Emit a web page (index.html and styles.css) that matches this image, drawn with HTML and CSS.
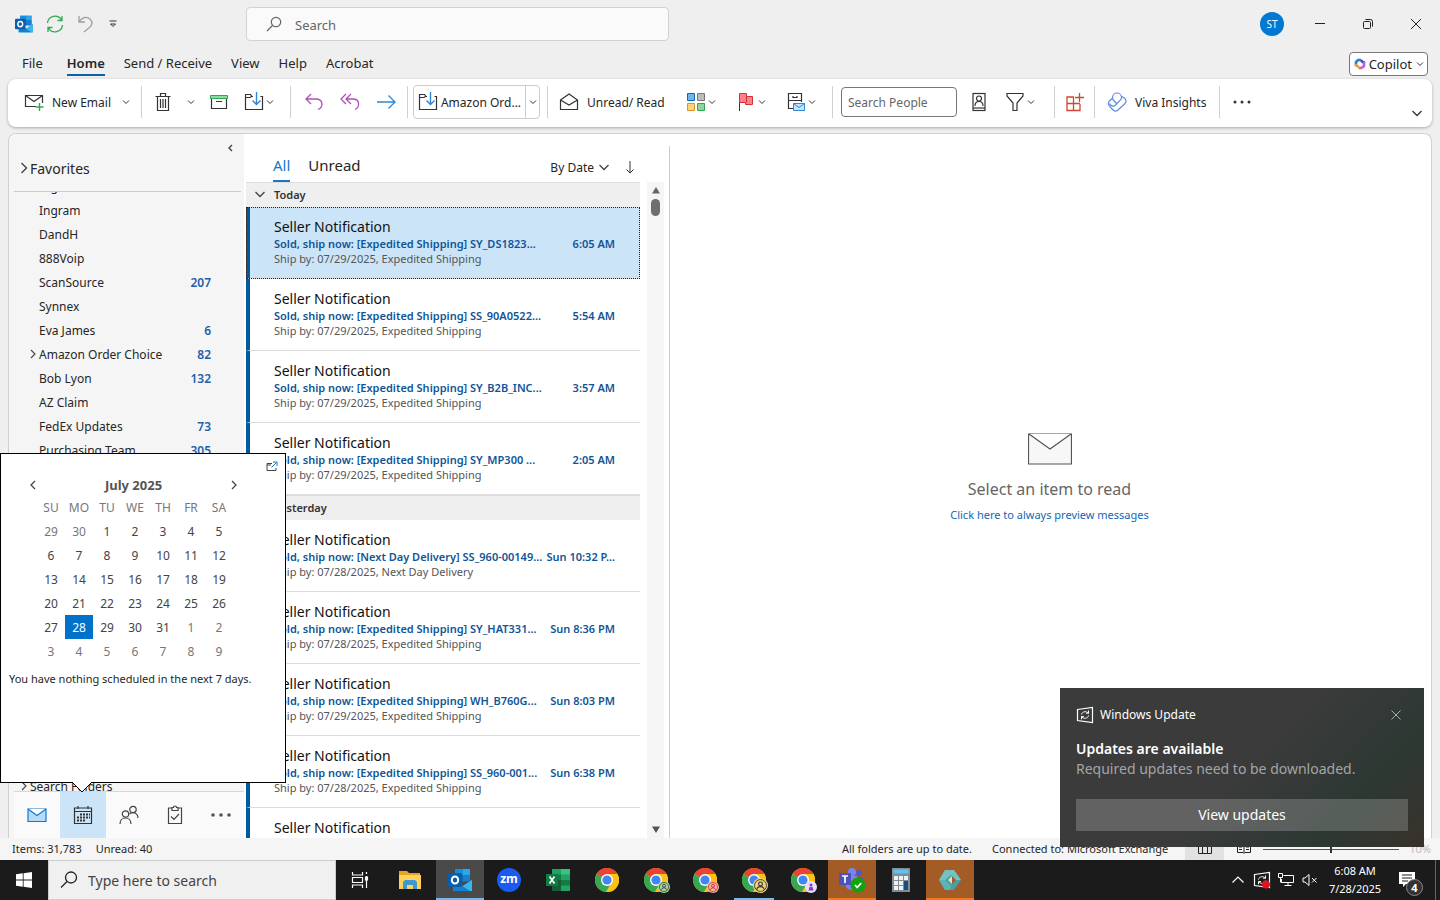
FILE: index.html
```
<!DOCTYPE html>
<html lang="en">

<head>
    <meta charset="utf-8">
    <meta name="viewport" content="width=device-width, initial-scale=1.0">
    <title>Outlook</title>
    <link rel="stylesheet" href="styles.css">
</head>

<body>
    <svg class="sprite" aria-hidden="true">
        <symbol id="down" viewBox="0 0 10 10"><path d="M2 3.500l3 3 3-3" fill="none" stroke="#333"/></symbol>
        <symbol id="right" viewBox="0 0 10 12"><path d="M2.500 1l5 5-5 5" fill="none" stroke="#444" stroke-width="1.400"/></symbol>
        <symbol id="move" viewBox="0 0 20 20"><path d="M9 4.500H8L6.500 2.500h-5v15h17v-13h-2M1.500 5.500H6l1.500-1" fill="none" stroke="#333" stroke-width="1.200"/><path d="M12.500 0v12.500M8.500 8.500l4 4 4-4" fill="none" stroke="#2b88d8" stroke-width="1.400"/></symbol>
        <symbol id="outlook" viewBox="0 0 24 24"><path d="M7 1h15v13H7z" fill="#0f6cbd"/><path d="M7 1h8v6H7z" fill="#1490df"/><path d="M15 1h7v6h-7z" fill="#28a8ea"/><path d="M15 7h7v6h-7z" fill="#1b7fd0"/><path d="M5 12l10 6 9-6v11H5z" fill="#1490df"/><path d="M24 12v11H7z" fill="#35b8f1"/><path d="M5 12l17 11H5z" fill="#1a7fcb"/><rect x="0" y="5" width="14" height="14" rx="1" fill="#0a5cad"/><ellipse cx="7" cy="12" rx="3.200" ry="3.500" fill="none" stroke="#fff" stroke-width="2"/></symbol>
        <symbol id="chrome" viewBox="0 0 24 24"><circle cx="12" cy="12" r="12" fill="#fbc116"/><path d="M12 12L1.600 6A12 12 0 0 1 22.400 6z" fill="#ea4335"/><path d="M12 12L1.600 6A12 12 0 0 0 11 24l5-9z" fill="#34a853"/><path d="M12 6h10.400a12 12 0 0 1-11.400 18l6.200-9z" fill="#fbc116"/><circle cx="12" cy="12" r="6" fill="#fff"/><circle cx="12" cy="12" r="4.600" fill="#4285f4"/></symbol>
        <symbol id="person" viewBox="0 0 12 12"><circle cx="6" cy="6" r="5.500" fill="none" stroke="currentColor" stroke-width=".8"/><circle cx="6" cy="4.500" r="1.800" fill="none" stroke="currentColor"/><path d="M2.500 10c.4-4 6.600-4 7 0" fill="none" stroke="currentColor"/></symbol>
        <symbol id="update" viewBox="0 0 18 18"><path d="M1.500 3.500l15-2v15l-15-2z" fill="none" stroke="#fff" stroke-width="1.200"/><path d="M5.500 8.500c.5-3 5-4 7-1M12.500 4.500v2.700H10M12.500 9.500c-.5 3-5 4-7 1M5.500 13.300v-2.700H8" fill="none" stroke="#fff"/></symbol>
    </svg>

    <header class="titlebar">
        <div class="quick">
            <svg width="18" height="18"><use href="#outlook"/></svg>
            <button aria-label="Send and receive all"><svg width="18" height="18" viewBox="0 0 18 18" fill="none" stroke="#33a652" stroke-width="1.300"><path d="M1.500 8A7.500 7.500 0 0 1 15.500 5M16 1v4.500h-4.500M16.500 10a7.500 7.500 0 0 1-14 3M2 17v-4.500h4.500"/></svg></button>
            <button aria-label="Undo"><svg width="18" height="18" viewBox="0 0 18 18" fill="none" stroke="#a0a0a0" stroke-width="1.300"><path d="M2 1v6h6M2 7c3-5 8-6 11-3s2 6 0 8l-6 5"/></svg></button>
            <button aria-label="Customize"><svg width="10" height="10" viewBox="0 0 10 10" fill="none" stroke="#333"><path d="M1.500 2h7M2.500 5l2.500 2.500L7.500 5z"/></svg></button>
        </div>
        <label class="search">
            <svg width="16" height="16" viewBox="0 0 16 16" fill="none" stroke="#666" stroke-width="1.200"><circle cx="10" cy="6" r="4.700"/><path d="M6.500 9.500L1 15"/></svg>
            <input type="text" placeholder="Search" aria-label="Search">
        </label>
        <div class="window-controls">
            <span class="avatar">ST</span>
            <button aria-label="Minimize"><svg width="12" height="12" viewBox="0 0 12 12"><path d="M1 5.500h10" stroke="#222"/></svg></button>
            <button aria-label="Restore"><svg width="12" height="12" viewBox="0 0 12 12" fill="none" stroke="#222"><rect x="1.500" y="3.500" width="7" height="7" rx="1"/><path d="M3.500 1.500h5a2 2 0 0 1 2 2v5"/></svg></button>
            <button aria-label="Close"><svg width="12" height="12" viewBox="0 0 12 12"><path d="M1 1l10 10M11 1L1 11" stroke="#222"/></svg></button>
        </div>
    </header>

    <nav class="tabs">
        <a href="#">File</a>
        <a href="#" class="active">Home</a>
        <a href="#">Send / Receive</a>
        <a href="#">View</a>
        <a href="#">Help</a>
        <a href="#">Acrobat</a>
        <button class="copilot"><svg width="12" height="12" viewBox="0 0 12 12" fill="none" stroke-width="2.600"><path d="M2 8V4l2-2h3" stroke="#2383dc"/><path d="M7 2l1.500 2L11 5" stroke="#2b57c9"/><path d="M10 4v4L8 10" stroke="#c45be0"/><path d="M8 10H5" stroke="#f05a78"/><path d="M5 10L3.500 8 1 7" stroke="#f5a13a"/></svg>Copilot<svg width="10" height="10"><use href="#down"/></svg></button>
    </nav>

    <div class="ribbon">
        <div class="group new">
            <button><svg width="20" height="20" viewBox="0 0 20 20" fill="none" stroke="#333" stroke-width="1.200"><path d="M12 14.500H1.500v-11h17V11M1.500 3.500l8.500 6 8.500-6"/><path d="M15.500 11v8M11.500 15h8" stroke="#33a652" stroke-width="1.400"/></svg><span>New Email</span></button>
            <button class="drop" aria-label="New items"><svg width="10" height="10"><use href="#down"/></svg></button>
        </div>
        <div class="group">
            <button class="icon wide" aria-label="Delete"><svg width="20" height="20" viewBox="0 0 20 20" fill="none" stroke="#333" stroke-width="1.200"><path d="M2.500 4.500h15M7.500 4V1.500h5V4M4.500 4.500v14h11v-14M7.500 7v9M10 7v9M12.500 7v9"/></svg></button>
            <button class="drop" aria-label="Delete options"><svg width="10" height="10"><use href="#down"/></svg></button>
            <button class="icon wide" aria-label="Archive"><svg width="20" height="20" viewBox="0 0 20 20" fill="none"><path d="M2.500 6v10.500h15V6M7 9.500h6" stroke="#333" stroke-width="1.200"/><path d="M1.500 3.500h17v3h-17z" fill="#8bdba3" stroke="#33a652"/></svg></button>
            <button class="menu" aria-label="Move"><svg width="20" height="20"><use href="#move"/></svg><svg width="10" height="10"><use href="#down"/></svg></button>
        </div>
        <div class="group replies">
            <button class="icon" aria-label="Reply"><svg width="20" height="20" viewBox="0 0 20 20" fill="none" stroke="#ae50b8" stroke-width="1.300"><path d="M7 2L2 7l5 5M2 7h10c7 0 8 8 2 10.500"/></svg></button>
            <button class="icon" aria-label="Reply all"><svg width="20" height="20" viewBox="0 0 20 20" fill="none" stroke="#ae50b8" stroke-width="1.300"><path d="M6 2L1 7l5 5M11 2L6 7l5 5M6 7h7c7 0 7 8 2 10.500"/></svg></button>
            <button class="icon" aria-label="Forward"><svg width="20" height="20" viewBox="0 0 20 20" fill="none" stroke="#2b88d8" stroke-width="1.300"><path d="M1 10h18M12.500 3.500L19 10l-6.500 6.500"/></svg></button>
        </div>
        <div class="group">
            <div class="quickstep">
                <button><svg width="20" height="20"><use href="#move"/></svg><span>Amazon Ord...</span></button>
                <button class="drop" aria-label="Quick steps"><svg width="10" height="10"><use href="#down"/></svg></button>
            </div>
        </div>
        <div class="group tags">
            <button class="text"><svg width="20" height="20" viewBox="0 0 20 20" fill="none" stroke="#333" stroke-width="1.200"><path d="M1.500 8L10 2l8.500 6v9.500h-17zM1.500 8l8.500 5 8.500-5"/></svg><span>Unread/ Read</span></button>
            <button class="menu" aria-label="Categorize"><svg width="20" height="20" viewBox="0 0 20 20"><path d="M1.500 1.500h7v7h-7z" fill="#6fb5e8" stroke="#1068b0"/><path d="M11.500 1.500h7v7h-7z" fill="#bbb" stroke="#777"/><path d="M1.500 11.500h7v7h-7z" fill="#ffd680" stroke="#dd9326"/><path d="M11.500 11.500h7v7h-7z" fill="#8ed69d" stroke="#33a652"/></svg><svg width="10" height="10"><use href="#down"/></svg></button>
            <button class="menu" aria-label="Follow up"><svg width="20" height="20" viewBox="0 0 20 20"><path d="M3.500 2v17" stroke="#333"/><path d="M3.500 1.500h7v3h6v8h-7v-2h-6z" fill="#ff808a" stroke="#d13438"/><path d="M10.500 4v6.500" stroke="#d13438"/></svg><svg width="10" height="10"><use href="#down"/></svg></button>
            <button class="menu" aria-label="Archive mail"><svg width="20" height="20" viewBox="0 0 20 20" fill="none"><path d="M7 16.500H2.500v-15h13V10M2.500 8.500h13M7 4v1.500h4V4" stroke="#333" stroke-width="1.200"/><path d="M7.500 11.500h11v7h-11z" fill="#c9e5fb" stroke="#2b88d8"/><path d="M7.500 11.500l5.500 4 5.500-4" stroke="#2b88d8"/></svg><svg width="10" height="10"><use href="#down"/></svg></button>
        </div>
        <div class="group find">
            <input type="text" placeholder="Search People" aria-label="Search People">
            <button class="icon" aria-label="Address book"><svg width="20" height="20" viewBox="0 0 20 20" fill="none" stroke="#333" stroke-width="1.200"><rect x="4" y="1.500" width="12" height="17"/><path d="M4 16h12"/><circle cx="10" cy="6.500" r="2.500"/><path d="M6 14c0-6 8-6 8 0"/></svg></button>
            <button class="menu filter" aria-label="Filter email"><svg width="20" height="20" viewBox="0 0 20 20" fill="none" stroke="#333" stroke-width="1.200"><path d="M2 1.500h16V4l-6 7v7.500H8V11L2 4z"/></svg><svg width="10" height="10"><use href="#down"/></svg></button>
        </div>
        <div class="group">
            <button class="icon addins" aria-label="All apps"><svg width="20" height="20" viewBox="0 0 20 20" fill="none" stroke="#d0472b" stroke-width="1.300"><path d="M9 5H2v13.500h13V12M2 11.500h13M8.500 5v13.500M14.500 1v9M10 5.500h9"/></svg></button>
        </div>
        <div class="group">
            <button class="text viva"><svg width="20" height="20" viewBox="0 0 20 20" fill="none" stroke="#5b8ce0" stroke-width="1.200"><path d="M5.500 7V5.500a4.500 4.500 0 0 1 9 0c0 1-.5 2-1.200 2.700L8.500 13M5.500 6L2 9.500a3.500 3.500 0 0 0 0 4l3.500 4a4 4 0 0 0 5.500.5l6.500-6a4 4 0 0 0 .5-5.500l-3-2M5.500 7l4 4.500M8.500 13c-2 2-5 1-6-1.500"/></svg><span>Viva Insights</span></button>
        </div>
        <button class="icon more" aria-label="More commands"><svg width="20" height="20" viewBox="0 0 20 20" fill="#333"><circle cx="3" cy="10" r="1.500"/><circle cx="10" cy="10" r="1.500"/><circle cx="17" cy="10" r="1.500"/></svg></button>
        <button class="ribbon-toggle" aria-label="Ribbon options"><svg width="12" height="12" viewBox="0 0 12 12"><path d="M1.500 4L6 8.500 10.500 4" fill="none" stroke="#333" stroke-width="1.300"/></svg></button>
    </div>

    <main class="panes">
        <aside class="folders">
            <div class="fold-head">
                <button class="collapse" aria-label="Minimize folder pane"><svg width="8" height="10" viewBox="0 0 8 10"><path d="M6 2L3 5l3 3" fill="none" stroke="#444" stroke-width="1.400"/></svg></button>
                <a href="#" class="favorites"><svg width="10" height="12"><use href="#right"/></svg>Favorites</a>
            </div>
            <ul class="tree">
                <li><a href="#">Ing</a></li>
                <li><a href="#">Ingram</a></li>
                <li><a href="#">DandH</a></li>
                <li><a href="#">888Voip</a></li>
                <li><a href="#">ScanSource</a><b>207</b></li>
                <li><a href="#">Synnex</a></li>
                <li><a href="#">Eva James</a><b>6</b></li>
                <li class="parent"><svg width="8" height="10"><use href="#right"/></svg><a href="#">Amazon Order Choice</a><b>82</b></li>
                <li><a href="#">Bob Lyon</a><b>132</b></li>
                <li><a href="#">AZ Claim</a></li>
                <li><a href="#">FedEx Updates</a><b>73</b></li>
                <li><a href="#">Purchasing Team</a><b>305</b></li>
                <li class="parent root"><svg width="8" height="10"><use href="#right"/></svg><a href="#">Search Folders</a></li>
            </ul>
            <nav class="modules">
                <button aria-label="Mail"><svg width="20" height="20" viewBox="0 0 20 20"><path d="M1 4h18v12.500H1z" fill="#b4dcfa" stroke="#1878c8" stroke-width="1.200"/><path d="M1 4l9 6.500L19 4" fill="#fff" stroke="#1878c8" stroke-width="1.200"/></svg></button>
                <button class="on" aria-label="Calendar"><svg width="20" height="20" viewBox="0 0 20 20" fill="none" stroke="#333" stroke-width="1.200"><path d="M1.500 3h17v15.500h-17zM1.500 6.500h17M5 1v3M15 1v3"/><path d="M7 9.500h10M4 12.500h13M4 15.500h9" stroke-width="2" stroke-dasharray="2 1"/></svg></button>
                <button aria-label="People"><svg width="20" height="20" viewBox="0 0 20 20" fill="none" stroke="#444" stroke-width="1.200"><circle cx="6.500" cy="9" r="3.200"/><path d="M1 19c0-8 11-8 11 0"/><circle cx="14" cy="4.500" r="3.200"/><path d="M10.500 9c3-3 8.500-1 8.500 4"/></svg></button>
                <button aria-label="Tasks"><svg width="20" height="20" viewBox="0 0 20 20" fill="none" stroke="#444" stroke-width="1.200"><path d="M7 3H3.500v15.500h13V3H13M7 5.500v-3h1.500a1.500 1.500 0 0 1 3 0H13v3zM6 11.500l3 3 5-5.500"/></svg></button>
                <button aria-label="More"><svg width="22" height="20" viewBox="0 0 22 20" fill="#555"><circle cx="3" cy="10" r="1.800"/><circle cx="11" cy="10" r="1.800"/><circle cx="19" cy="10" r="1.800"/></svg></button>
            </nav>

            <!-- calendar peek, opens above the module buttons -->
            <section class="peek">
                <button class="dock" aria-label="Dock the peek"><svg width="12" height="12" viewBox="0 0 12 12" fill="none"><path d="M6 2.500H1v7h9V7M1 4h4" stroke="#444"/><path d="M5.500 6.500l5-5M7 1h4v4" stroke="#1878c8"/></svg></button>
                <div class="month">
                    <button aria-label="Previous month"><svg width="10" height="12" viewBox="0 0 10 12"><path d="M7 2L3 6l4 4" fill="none" stroke="#444" stroke-width="1.300"/></svg></button>
                    <strong>July 2025</strong>
                    <button aria-label="Next month"><svg width="10" height="12" viewBox="0 0 10 12"><path d="M3 2l4 4-4 4" fill="none" stroke="#444" stroke-width="1.300"/></svg></button>
                </div>
                <table>
                    <tr><th>SU</th><th>MO</th><th>TU</th><th>WE</th><th>TH</th><th>FR</th><th>SA</th></tr>
                    <tr><td class="out">29</td><td class="out">30</td><td>1</td><td>2</td><td>3</td><td>4</td><td>5</td></tr>
                    <tr><td>6</td><td>7</td><td>8</td><td>9</td><td>10</td><td>11</td><td>12</td></tr>
                    <tr><td>13</td><td>14</td><td>15</td><td>16</td><td>17</td><td>18</td><td>19</td></tr>
                    <tr><td>20</td><td>21</td><td>22</td><td>23</td><td>24</td><td>25</td><td>26</td></tr>
                    <tr><td>27</td><td class="today">28</td><td>29</td><td>30</td><td>31</td><td class="out">1</td><td class="out">2</td></tr>
                    <tr><td class="out">3</td><td class="out">4</td><td class="out">5</td><td class="out">6</td><td class="out">7</td><td class="out">8</td><td class="out">9</td></tr>
                </table>
                <p>You have nothing scheduled in the next 7 days.</p>
                <svg class="tip" width="20" height="11" viewBox="0 0 20 11"><path d="M0 0l10 10L20 0" fill="#fff" stroke="#000"/></svg>
            </section>
        </aside>

        <section class="list">
            <div class="list-head">
                <a href="#" class="active">All</a>
                <a href="#">Unread</a>
                <button class="sort">By Date<svg width="12" height="12" viewBox="0 0 12 12"><path d="M1.500 4L6 8.500 10.500 4" fill="none" stroke="#444" stroke-width="1.300"/></svg></button>
                <button aria-label="Sort order"><svg width="10" height="14" viewBox="0 0 10 14"><path d="M5 1v12M1.500 9.500L5 13l3.500-3.500" fill="none" stroke="#333"/></svg></button>
            </div>
            <div class="scroll">
                <div class="messages">
                    <h3><svg width="12" height="12" viewBox="0 0 12 12"><path d="M1.500 4L6 8.500 10.500 4" fill="none" stroke="#444" stroke-width="1.300"/></svg>Today</h3>
                    <article class="selected"><h4>Seller Notification</h4><div class="subject"><span>Sold, ship now: [Expedited Shipping] SY_DS1823...</span><time>6:05 AM</time></div><p>Ship by: 07/29/2025, Expedited Shipping</p></article>
                    <article><h4>Seller Notification</h4><div class="subject"><span>Sold, ship now: [Expedited Shipping] SS_90A0522...</span><time>5:54 AM</time></div><p>Ship by: 07/29/2025, Expedited Shipping</p></article>
                    <article><h4>Seller Notification</h4><div class="subject"><span>Sold, ship now: [Expedited Shipping] SY_B2B_INC...</span><time>3:57 AM</time></div><p>Ship by: 07/29/2025, Expedited Shipping</p></article>
                    <article><h4>Seller Notification</h4><div class="subject"><span>Sold, ship now: [Expedited Shipping] SY_MP300 ...</span><time>2:05 AM</time></div><p>Ship by: 07/29/2025, Expedited Shipping</p></article>
                    <h3><svg width="12" height="12" viewBox="0 0 12 12"><path d="M1.500 4L6 8.500 10.500 4" fill="none" stroke="#444" stroke-width="1.300"/></svg>Yesterday</h3>
                    <article><h4>Seller Notification</h4><div class="subject"><span>Sold, ship now: [Next Day Delivery] SS_960-00149...</span><time>Sun 10:32 P...</time></div><p>Ship by: 07/28/2025, Next Day Delivery</p></article>
                    <article><h4>Seller Notification</h4><div class="subject"><span>Sold, ship now: [Expedited Shipping] SY_HAT331...</span><time>Sun 8:36 PM</time></div><p>Ship by: 07/28/2025, Expedited Shipping</p></article>
                    <article><h4>Seller Notification</h4><div class="subject"><span>Sold, ship now: [Expedited Shipping] WH_B760G...</span><time>Sun 8:03 PM</time></div><p>Ship by: 07/29/2025, Expedited Shipping</p></article>
                    <article><h4>Seller Notification</h4><div class="subject"><span>Sold, ship now: [Expedited Shipping] SS_960-001...</span><time>Sun 6:38 PM</time></div><p>Ship by: 07/28/2025, Expedited Shipping</p></article>
                    <article><h4>Seller Notification</h4></article>
                </div>
                <div class="scrollbar">
                    <svg width="10" height="8" viewBox="0 0 10 8"><path d="M5 1l4 6.500H1z" fill="#666"/></svg>
                    <span class="thumb"></span>
                    <svg class="end" width="10" height="8" viewBox="0 0 10 8"><path d="M5 7L1 .5h8z" fill="#555"/></svg>
                </div>
            </div>
        </section>

        <section class="reading">
            <svg width="44" height="32" viewBox="0 0 44 32"><path d="M.5 1h43v30H.5z" fill="#f7f7f7" stroke="#555" stroke-width="1.200"/><path d="M1 1l21 15L43 1" fill="#fff" stroke="#555" stroke-width="1.200"/></svg>
            <h2>Select an item to read</h2>
            <a href="#">Click here to always preview messages</a>
        </section>
    </main>

    <footer class="status">
        <span>Items: 31,783</span>
        <span>Unread: 40</span>
        <span class="sync">All folders are up to date.</span>
        <span class="conn">Connected to: Microsoft Exchange</span>
        <button class="on" aria-label="Normal view"><svg width="14" height="12" viewBox="0 0 14 12" fill="none" stroke="#222"><path d="M.5.500h13v10H.5zM4.500.500v10M9.500.500v10"/></svg></button>
        <button aria-label="Reading view"><svg width="14" height="12" viewBox="0 0 14 12" fill="none" stroke="#222"><path d="M.5 1.500H6l1 1 1-1h5.500v8H8l-1 1-1-1H.5zM7 2v8M2 4h3M2 6.500h3M9 4h3M9 6.500h3"/></svg></button>
        <input type="range" aria-label="Zoom" min="0" max="100" value="50">
        <span class="zoom">10%</span>
    </footer>

    <div class="taskbar">
        <button class="start" aria-label="Start"><svg width="16" height="16" viewBox="0 0 16 16" fill="#fff"><path d="M0 2.300L6.800 1.300V7.600H0zM7.600 1.200L16 0v7.600H7.600zM0 8.400h6.800v6.300L0 13.700zM7.600 8.400H16V16l-8.400-1.200z"/></svg></button>
        <label class="tasksearch">
            <svg width="18" height="18" viewBox="0 0 18 18" fill="none" stroke="#222" stroke-width="1.300"><circle cx="11" cy="6.500" r="5.500"/><path d="M7 10.500L1 16.500"/></svg>
            <input type="text" placeholder="Type here to search" aria-label="Type here to search">
        </label>
        <div class="apps">
            <button aria-label="Task view"><svg width="18" height="18" viewBox="0 0 18 18" fill="none" stroke="#fff" stroke-width="1.200"><path d="M1.500 1v3h10V1M1.500 6.500h10v5h-10zM1.500 17v-3h10v3M15.500 5v12M15.500 1v2"/><path d="M14.500 6h2v3h-2z" fill="#fff"/></svg></button>
            <button class="explorer" aria-label="File Explorer"><svg width="24" height="24" viewBox="0 0 24 24"><path d="M1 3h8l2 2h11v16H1z" fill="#e5a428"/><path d="M1 7h22v14H1z" fill="#ffd15a"/><path d="M5 21v-7l2-2h10l2 2v7h-4v-4H9v4z" fill="#3e97d1"/></svg></button>
            <button class="current" aria-label="Outlook"><svg width="24" height="24"><use href="#outlook"/></svg></button>
            <button aria-label="Zoom"><span class="zm">zm</span></button>
            <button aria-label="Excel"><svg width="24" height="24" viewBox="0 0 24 24"><path d="M6 1h18v22H6z" fill="#21a366"/><path d="M6 6.500h9V12H6zM15 12h9v5.500h-9z" fill="#107c41"/><path d="M15 1h9v5.500h-9z" fill="#33c481"/><path d="M6 12h9v11H6z" fill="#185c37"/><path d="M0 6h12v12H0z" fill="#107c41"/><path d="M3.500 8.500l5 7M8.500 8.500l-5 7" stroke="#fff" stroke-width="1.700"/></svg></button>
            <button aria-label="Chrome"><svg width="24" height="24"><use href="#chrome"/></svg></button>
            <button aria-label="Chrome, profile 2"><svg width="24" height="24"><use href="#chrome"/></svg><span class="profile green"><svg width="10" height="10"><use href="#person"/></svg></span></button>
            <button aria-label="Chrome, profile 3"><svg width="24" height="24"><use href="#chrome"/></svg><span class="profile red"><svg width="10" height="10"><use href="#person"/></svg></span></button>
            <button class="open" aria-label="Chrome, profile 4"><svg width="24" height="24"><use href="#chrome"/></svg><span class="profile gold"><svg width="13" height="13"><use href="#person"/></svg></span></button>
            <button aria-label="Chrome, profile 5"><svg width="24" height="24"><use href="#chrome"/></svg><span class="profile violet"><svg width="8" height="8" viewBox="0 0 8 8" fill="#7c3fc0"><circle cx="4" cy="2" r="1.500"/><path d="M1.500 7.500l1-3.500h3l1 3.500z"/></svg></span></button>
            <button class="alert" aria-label="Teams"><svg width="28" height="26" viewBox="0 0 28 26"><circle cx="14" cy="5" r="4" fill="#7b83eb"/><circle cx="21" cy="6" r="3" fill="#5059c9"/><path d="M8 9h11v9a6 6 0 0 1-11 2z" fill="#7b83eb"/><path d="M19 10h6v7h-6z" fill="#5059c9"/><path d="M1 6h12v12H1z" fill="#4b53bc"/><path d="M4 9h6M7 9v7" stroke="#fff" stroke-width="1.700"/><circle cx="20" cy="18" r="7.500" fill="#13a10e"/><path d="M17 18l2.200 2.500 4-4.500" fill="none" stroke="#fff" stroke-width="1.700"/></svg></button>
            <button aria-label="Calculator"><svg width="18" height="24" viewBox="0 0 18 24"><path d="M0 0h18v24H0z" fill="#848b91"/><path d="M1.500 1.500h15v4h-15z" fill="#5ec3ee"/><path d="M2 8h4v4H2zM7 8h4v4H7zM12 8h4v4h-4zM2 13h4v4H2zM7 13h4v4H7zM2 18h4v4H2zM7 18h4v4H7z" fill="#eef2f5"/><path d="M12 13h4v9h-4z" fill="#164d86"/></svg></button>
            <button class="alert" aria-label="Remote app"><svg width="22" height="22" viewBox="0 0 22 22"><path d="M0 11L6 1h9l7 10-7 10H6z" fill="#4a9fa2"/><path d="M6 1h9l7 10h-6l-4-5-6 5H0z" fill="#74c3c2"/><path d="M0 11h6l6 6-1 4H6z" fill="#5db3b5"/><path d="M13 7l4 4-4 4-3-4z" fill="#a35c25"/><path d="M9 11l4-4v8z" fill="#cfe4df"/></svg></button>
        </div>
        <div class="tray">
            <button aria-label="Show hidden icons"><svg width="14" height="14" viewBox="0 0 14 14"><path d="M1.500 9.500L7 4l5.500 5.500" fill="none" stroke="#fff" stroke-width="1.200"/></svg></button>
            <button aria-label="Windows Update"><svg width="18" height="18" viewBox="0 0 18 18"><use href="#update"/><circle cx="13" cy="13.500" r="4" fill="#e81123"/></svg></button>
            <button aria-label="Network"><svg width="18" height="16" viewBox="0 0 18 16" fill="none" stroke="#fff"><path d="M6.500 3.500h10v7h-12V7M11 10.500v3M7.500 13.500h7M1.500 1.500h4v4h-4zM3.500 5.500v5"/></svg></button>
            <button aria-label="Volume muted"><svg width="16" height="14" viewBox="0 0 16 14" fill="none" stroke="#fff"><path d="M1 5v4h2l4 3.500v-11L3 5zM10 5l4.500 4.500M14.500 5L10 9.500"/></svg></button>
            <time>6:08 AM<br>7/28/2025</time>
            <button class="notify" aria-label="Notifications"><svg width="18" height="18" viewBox="0 0 18 18"><path d="M1 1h16v12H8l-3 3v-3H1z" fill="#fff"/><path d="M4 4h10M4 7h10M4 10h6" stroke="#1b1b1b"/></svg><span>4</span></button>
        </div>
    </div>

    <div class="toast" role="alert">
        <div class="toast-head">
            <svg width="18" height="18"><use href="#update"/></svg>
            <span>Windows Update</span>
            <button aria-label="Dismiss"><svg width="12" height="12" viewBox="0 0 12 12"><path d="M1.500 1.500l9 9M10.500 1.500l-9 9" stroke="#aaa"/></svg></button>
        </div>
        <h4>Updates are available</h4>
        <p>Required updates need to be downloaded.</p>
        <button class="view">View updates</button>
    </div>
</body>

</html>
```
FILE: styles.css
```
* {
    box-sizing: border-box;
}

body {
    margin: 0;
    height: 100vh;
    display: flex;
    flex-direction: column;
    overflow: hidden;
    background: #efefef;
    color: #262626;
    font-family: "Noto Sans", "Open Sans", sans-serif;
    font-size: 12px;
}

h2, h3, h4, p, ul {
    margin: 0;
    padding: 0;
    font-weight: normal;
}

a {
    color: inherit;
    text-decoration: none;
}

button {
    display: flex;
    align-items: center;
    justify-content: center;
    padding: 0;
    border: 0;
    background: none;
    color: inherit;
    font: inherit;
    white-space: nowrap;
}

input {
    min-width: 0;
    font: inherit;
}

svg {
    display: block;
    flex: none;
}

.sprite {
    position: absolute;
    width: 0;
    height: 0;
}

/* title bar */
.titlebar {
    display: flex;
    align-items: center;
    height: 48px;
}

.quick {
    display: flex;
    align-items: center;
    gap: 13px;
    width: 246px;
    padding-left: 15px;
}

.search {
    display: flex;
    align-items: center;
    gap: 12px;
    width: 423px;
    height: 34px;
    padding: 0 19px;
    border: 1px solid #d2d2d2;
    border-radius: 4px;
    background: #fafafa;
}

.search input {
    flex: 1;
    padding: 2px 0 0 1px;
    border: 0;
    background: none;
    font-size: 13px;
}

::placeholder {
    color: #666;
    opacity: 1;
}

.window-controls {
    display: flex;
    align-items: center;
    margin-left: auto;
}

.window-controls button {
    width: 48px;
    height: 48px;
}

.avatar {
    width: 24px;
    height: 24px;
    margin-right: 12px;
    border-radius: 50%;
    background: #0078d4;
    color: #fff;
    font-size: 10px;
    line-height: 24px;
    text-align: center;
}

/* tabs */
.tabs {
    display: flex;
    align-items: center;
    gap: 19px;
    height: 31px;
    padding: 0 12px 0 22px;
    font-size: 13px;
}

.tabs a {
    height: 24px;
    line-height: 22px;
}

.tabs .active {
    margin-left: 5px;
    border-bottom: 2px solid #0f5ea8;
    font-weight: 600;
}

.copilot {
    gap: 3px;
    height: 24px;
    margin-left: auto;
    padding: 0 2px 0 4px;
    border: 1px solid #777;
    border-radius: 4px;
    background: #fff;
}

/* ribbon */
.ribbon {
    display: flex;
    align-items: center;
    height: 48px;
    margin: 0 8px;
    padding-bottom: 2px;
    border-radius: 8px;
    background: #fff;
    box-shadow: 0 1px 3px rgba(0, 0, 0, .3);
}

.group {
    display: flex;
    align-items: center;
    height: 32px;
    border-right: 1px solid #d0d0d0;
}

.ribbon button {
    height: 32px;
}

.new {
    width: 134px;
    padding-left: 16px;
}

.new button {
    gap: 8px;
}

.drop {
    width: 14px;
}

.new .drop {
    margin-left: 8px;
}

.icon {
    width: 36px;
}

.wide {
    width: 42px;
}

.menu {
    width: 50px;
    padding-left: 4px;
    justify-content: flex-start;
    gap: 1px;
}

.replies {
    padding: 0 3px 0 5px;
}

.quickstep {
    display: flex;
    width: 127px;
    height: 34px;
    margin: 0 7px 0 5px;
    border: 1px solid #ccc;
    border-radius: 4px;
}

.quickstep button:first-child {
    flex: 1;
    gap: 3px;
}

.quickstep .drop {
    border-left: 1px solid #ccc;
}

.text {
    gap: 8px;
    width: 134px;
    padding-left: 11px;
    justify-content: flex-start;
}

.find {
    padding-left: 8px;
}

.find input {
    width: 116px;
    height: 30px;
    margin-right: 4px;
    padding: 0 6px;
    border: 1px solid #777;
    border-radius: 4px;
}

.filter {
    width: 57px;
    padding-left: 8px;
}

.addins {
    width: 39px;
}

.viva {
    width: 124px;
    padding-left: 12px;
}

.more {
    margin-left: 4px;
}

.ribbon-toggle {
    align-self: flex-end;
    margin: 0 9px 0 auto;
    padding-top: 8px;
}

/* panes */
.panes {
    display: flex;
    flex: 1;
    min-height: 0;
    margin: 6px 8px 0;
    border: 1px solid #d0d0d0;
    border-bottom: 0;
    border-radius: 8px 8px 0 0;
    background: #fff;
}

.folders {
    position: relative;
    display: flex;
    flex-direction: column;
    width: 235px;
    border-radius: 8px 0 0 0;
    background: #f5f5f5;
}

.fold-head {
    height: 58px;
    margin: 0 3px 0 5px;
    padding-top: 7px;
    border-bottom: 1px solid #ccc;
}

.collapse {
    width: 14px;
    height: 14px;
    margin-left: auto;
    margin-right: 4px;
}

.favorites {
    display: flex;
    align-items: center;
    gap: 1px;
    height: 26px;
    padding-left: 5px;
    font-size: 14px;
}

.tree {
    display: flex;
    flex: 1;
    flex-direction: column;
    min-height: 0;
    overflow: hidden;
    list-style: none;
}

.tree li {
    display: flex;
    flex: none;
    align-items: center;
    height: 24px;
    padding: 0 33px 2px 30px;
}

.tree li:first-child {
    margin-top: -17px;
}

.tree b {
    margin-left: auto;
    color: #1f5fa8;
    font-weight: 600;
}

.tree .parent {
    gap: 2px;
    padding-left: 20px;
}

.tree .root {
    margin-top: auto;
    margin-bottom: -8px;
    padding-left: 11px;
}

.modules {
    display: flex;
    height: 47px;
    margin-left: 5px;
    border-top: 1px solid #d8d8d8;
    background: #fafafa;
}

.modules button {
    flex: 1;
}

.modules .on {
    background: #cce4f7;
}

.peek {
    position: absolute;
    left: -9px;
    bottom: 55px;
    z-index: 2;
    width: 286px;
    height: 330px;
    border: 1px solid #000;
    background: #fff;
}

.dock {
    height: 12px;
    margin: 7px 7px 0 auto;
}

.month {
    display: flex;
    align-items: center;
    justify-content: space-between;
    height: 24px;
    margin: 0 46px 0 27px;
    color: #555;
    font-size: 13px;
}

.peek table {
    margin: -2px 0 0 36px;
    border-collapse: collapse;
    table-layout: fixed;
    width: 196px;
}

.peek th, .peek td {
    height: 24px;
    padding: 0;
    color: #444;
    text-align: center;
    font-weight: normal;
}

.peek th, .peek .out {
    color: #777;
}

.peek .today {
    background: #0072c9;
    color: #fff;
}

.peek p {
    margin: 8px;
    font-size: 11px;
}

.tip {
    position: absolute;
    top: 328px;
    left: 71px;
}

/* message list */
.list {
    display: flex;
    flex-direction: column;
    width: 426px;
    margin-top: 12px;
    padding-left: 2px;
    border-right: 1px solid #ccc;
}

.list-head {
    display: flex;
    align-items: center;
    gap: 15px;
    height: 36px;
    padding: 6px 34px 0 27px;
}

.list-head a {
    height: 30px;
    padding-top: 3px;
    font-size: 15px;
    line-height: 20px;
}

.list-head a + a {
    margin-left: 3px;
}

.list-head .active {
    border-bottom: 2px solid #1878c8;
    color: #1878c8;
}

.sort {
    gap: 4px;
    margin-left: auto;
}

.scroll {
    display: flex;
    flex: 1;
    gap: 7px;
    min-height: 0;
}

.messages {
    flex: 1;
    overflow: hidden;
}

.messages h3 {
    display: flex;
    align-items: center;
    gap: 8px;
    height: 25px;
    padding: 0 0 2px 8px;
    border-top: 1px solid #ddd;
    background: #efefef;
    color: #333;
    font-size: 11px;
    font-weight: 600;
}

.messages article {
    height: 72px;
    padding: 11px 25px 0 24px;
    border-left: 4px solid #005a9e;
    border-bottom: 1px solid #ddd;
}

.messages .selected {
    background: #cce4f7;
    outline: 1px dotted #222;
    outline-offset: -1px;
}

.messages h4 {
    color: #111;
    font-size: 14px;
    line-height: 18px;
}

.subject {
    display: flex;
    justify-content: space-between;
    color: #0f5597;
    font-size: 11px;
    font-weight: 600;
    line-height: 15px;
    white-space: nowrap;
}

.messages p {
    color: #555;
    font-size: 11px;
    line-height: 15px;
}

.scrollbar {
    display: flex;
    flex-direction: column;
    align-items: center;
    width: 17px;
    margin-right: 5px;
    padding: 4px 0;
    background: #f5f5f5;
}

.thumb {
    width: 9px;
    height: 17px;
    margin-top: 5px;
    border-radius: 5px;
    background: #6e6e6e;
}

.end {
    margin-top: auto;
}

.reading {
    display: flex;
    flex: 1;
    flex-direction: column;
    align-items: center;
    justify-content: center;
    padding: 0 2px 16px 0;
}

.reading h2 {
    margin: 8px 0 2px;
    color: #666;
    font-size: 16px;
    line-height: 32px;
}

.reading a {
    color: #1068b8;
    font-size: 11px;
    line-height: 16px;
}

/* status bar */
.status {
    display: flex;
    align-items: center;
    height: 22px;
    padding: 0 9px 0 12px;
    background: #f5f5f5;
    font-size: 11px;
}

.status span {
    margin-right: 14px;
    padding-bottom: 2px;
}

.status .sync {
    margin-left: auto;
    margin-right: 20px;
}

.status .conn {
    margin-right: 17px;
}

.status button {
    width: 39px;
    height: 22px;
}

.status .on {
    background: #e1e1e1;
}

.status input {
    width: 136px;
    height: 10px;
    margin: 0 10px 0 0;
    appearance: none;
    background: linear-gradient(#555, #555) center / 100% 1px no-repeat;
}

.status input::-webkit-slider-thumb {
    appearance: none;
    width: 2px;
    height: 8px;
    background: #333;
}

.status .zoom {
    margin-right: 0;
    color: #bbb;
}

/* taskbar */
.taskbar {
    display: flex;
    height: 40px;
    background: #1b1b1b;
    color: #fff;
}

.start {
    width: 48px;
}

.tasksearch {
    display: flex;
    align-items: center;
    gap: 8px;
    width: 288px;
    padding-left: 11px;
    border: 1px solid #ccc;
    background: #f0f0f0;
}

.tasksearch input {
    flex: 1;
    border: 0;
    background: none;
    font-size: 14px;
}

.tasksearch ::placeholder {
    color: #444;
}

.apps {
    display: flex;
    gap: 1px;
}

.apps button {
    position: relative;
    width: 48px;
    height: 40px;
}

.apps .explorer {
    width: 50px;
}

.apps .current {
    background: linear-gradient(#76b9ed, #76b9ed) center bottom / 100% 2px no-repeat #4a4a4a;
}

.apps .open {
    background: linear-gradient(#76b9ed, #76b9ed) center bottom / 40px 2px no-repeat;
}

.apps .alert {
    background: linear-gradient(#f7781c, #f7781c) center bottom / 100% 2px no-repeat #a35c25;
}

.zm {
    width: 24px;
    height: 24px;
    border-radius: 50%;
    background: #1a5cf0;
    font-size: 12px;
    font-weight: bold;
    line-height: 21px;
}

/* profile badge on a browser icon */
.profile {
    position: absolute;
    right: 10px;
    bottom: 7px;
    display: flex;
    padding: 1px;
    border-radius: 50%;
    color: #333;
}

.green {
    background: #a6d49b;
}

.red {
    background: #f4b0a2;
    color: #c22;
}

.gold {
    background: #ecd27c;
}

.violet {
    padding: 2px;
    background: #eadcff;
}

.tray {
    display: flex;
    align-items: center;
    margin-left: auto;
    padding-right: 4px;
}

.tray button {
    width: 24px;
    height: 40px;
}

.tray time {
    width: 66px;
    font-size: 11px;
    line-height: 18px;
    text-align: center;
}

.tray .notify {
    position: relative;
    width: 48px;
    padding-right: 10px;
    border-right: 1px solid #666;
}

.notify span {
    position: absolute;
    right: 12px;
    bottom: 4px;
    width: 17px;
    height: 17px;
    border: 1px solid #888;
    border-radius: 50%;
    background: #333;
    font-size: 11px;
    font-weight: bold;
    line-height: 15px;
}

/* notification */
.toast {
    position: fixed;
    right: 16px;
    bottom: 53px;
    z-index: 3;
    width: 364px;
    padding: 16px;
    background: linear-gradient(135deg, #3b3b3b 50%, #2d3833 78%, #37322b);
    color: #fff;
}

.toast-head {
    display: flex;
    align-items: center;
    gap: 6px;
    height: 21px;
}

.toast-head button {
    width: 24px;
    height: 21px;
    margin-left: auto;
}

.toast h4 {
    margin-top: 14px;
    font-size: 14px;
    font-weight: 600;
    line-height: 20px;
}

.toast p {
    color: #a5a5a5;
    font-size: 14px;
    line-height: 20px;
}

.view {
    width: 100%;
    height: 32px;
    margin-top: 20px;
    padding-bottom: 1px;
    background: rgba(255, 255, 255, .2);
    font-size: 14px;
}
```
